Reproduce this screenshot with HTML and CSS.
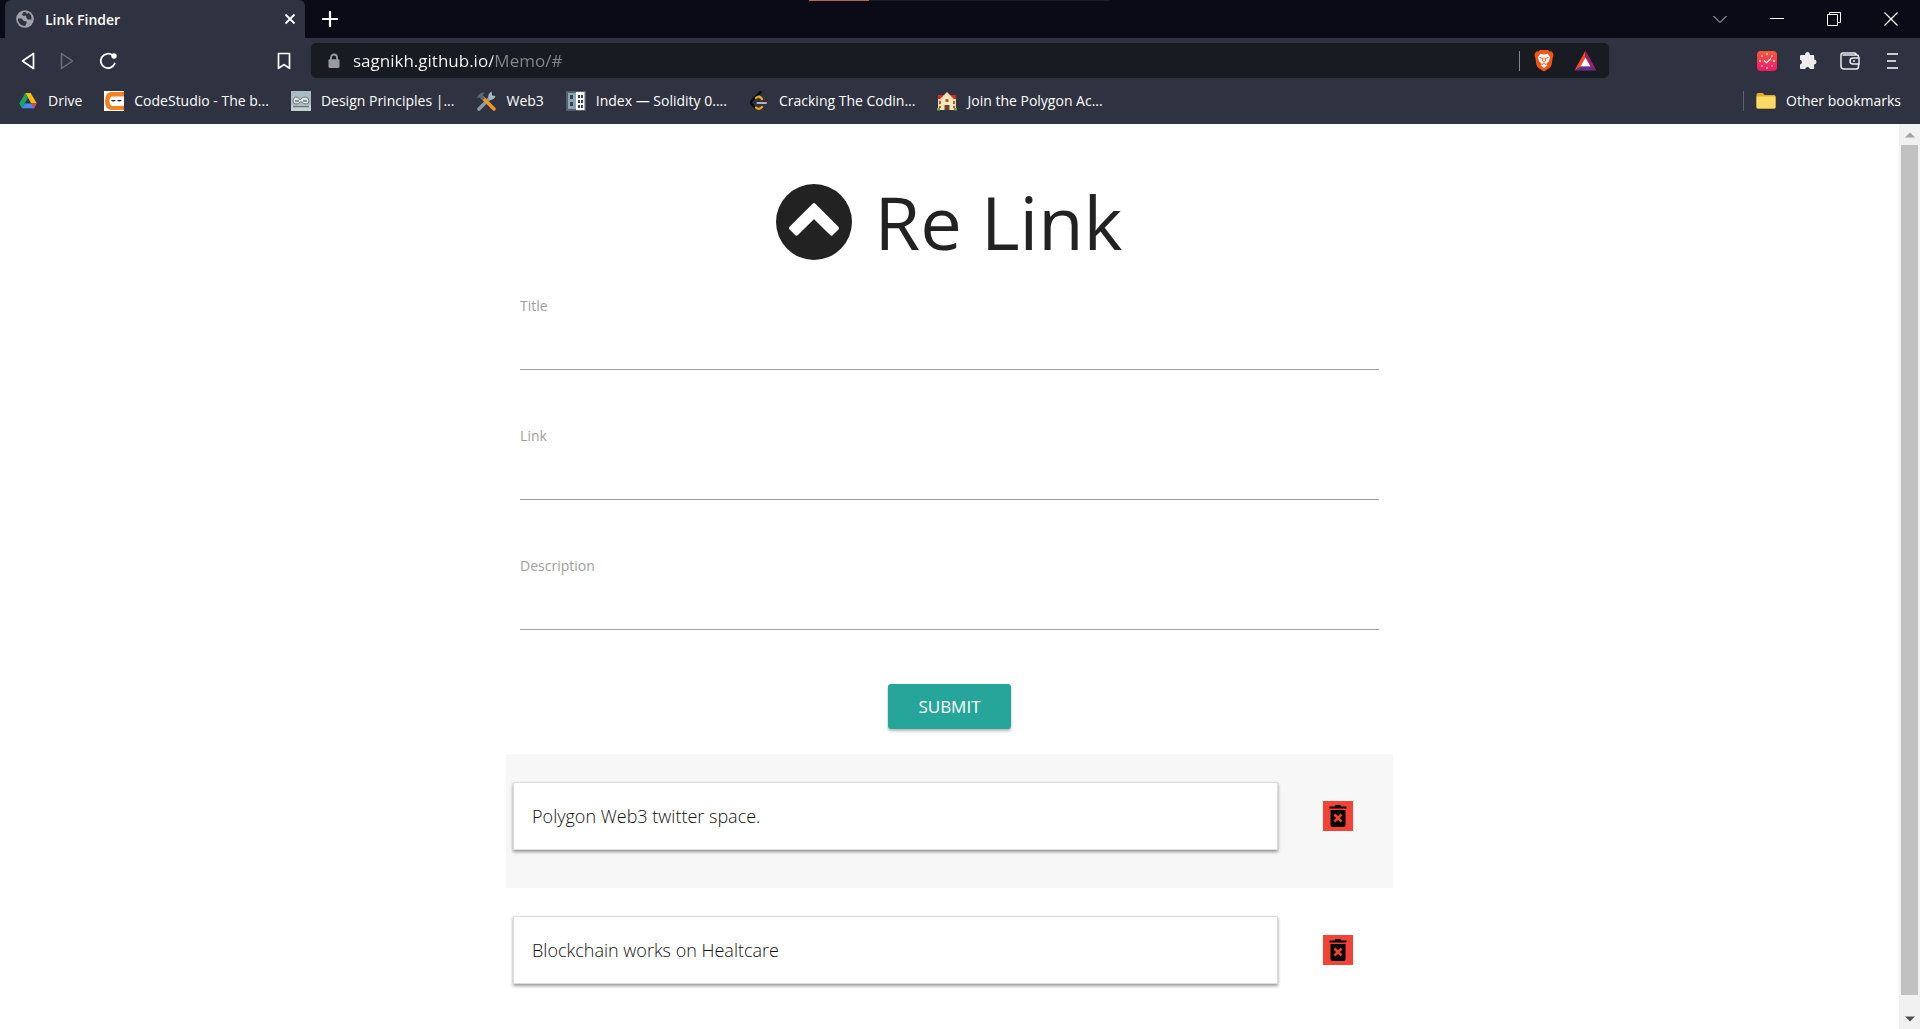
FILE: index.html
```html
<!DOCTYPE html>
<html lang="en">
<head>
<meta charset="utf-8">
<title>Link Finder</title>
<link rel="stylesheet" href="styles.css">
</head>
<body>
<header class="browser">
  <div class="tabstrip">
    <div class="tab">
      <svg class="tab-icon" viewBox="0 0 18 18"><circle cx="9" cy="9" r="8.8" fill="#9fa2a9"/><path d="M2 8.500h3.500l2.500 2.500 2.500.5v2L9 16q-5.500-.5-7-5.500zM7.500 2L6 4.500l1.500 1.500 2.500-.5.5 2.500L12 9.500h3.500q.5-4.500-3-6.700L11 4 9.500 2z" fill="#2f3241"/></svg>
      <span class="tab-title">Link Finder</span>
      <button class="icon-btn tab-close" aria-label="Close tab"><svg width="12" height="12" viewBox="0 0 12 12"><path d="M1.500 1.500l9 9M10.500 1.500l-9 9" stroke="#fff" stroke-width="1.800"/></svg></button>
    </div>
    <button class="icon-btn new-tab" aria-label="New tab"><svg width="16" height="16" viewBox="0 0 16 16"><path d="M8 1v14M1 8h14" stroke="#fff" stroke-width="2.200" stroke-linecap="round"/></svg></button>
    <div class="window-buttons">
      <button class="icon-btn" aria-label="Search tabs"><svg width="14" height="14" viewBox="0 0 14 14"><path d="M.5 4l6.500 6.500L13.500 4" fill="none" stroke="#d5d5da"/></svg></button>
      <button class="icon-btn" aria-label="Minimize"><svg width="14" height="14" viewBox="0 0 14 14"><path d="M0 6.500h14" stroke="#fff"/></svg></button>
      <button class="icon-btn" aria-label="Restore"><svg width="14" height="14" viewBox="0 0 14 14"><path d="M.5 2.500h10v11H.5zM2.500 2V.5h11v10H11" fill="none" stroke="#fff"/></svg></button>
      <button class="icon-btn" aria-label="Close window"><svg width="14" height="14" viewBox="0 0 14 14"><path d="M.5.5l13 13M13.500.5l-13 13" stroke="#fff" stroke-width="1.200"/></svg></button>
    </div>
    <div class="progress"><div class="progress-fill"></div></div>
  </div>

  <div class="toolbar">
    <div class="nav">
      <button class="icon-btn" aria-label="Back"><svg width="14" height="18" viewBox="0 0 14 18"><path d="M12.500 1.500v15L1.500 9z" fill="none" stroke="#fff" stroke-width="1.700" stroke-linejoin="round"/></svg></button>
      <button class="icon-btn" aria-label="Forward"><svg width="14" height="18" viewBox="0 0 14 18"><path d="M1.500 1.500v15l11-7.500z" fill="none" stroke="#6d707b" stroke-width="1.500" stroke-linejoin="round"/></svg></button>
      <button class="icon-btn" aria-label="Reload"><svg width="18" height="18" viewBox="0 0 18 18"><path d="M15.700 11.500A7.200 7.200 0 1 1 13.500 3.300" fill="none" stroke="#fff" stroke-width="1.800" stroke-linecap="round"/><circle cx="15" cy="4" r="2.700" fill="#fff"/></svg></button>
      <button class="icon-btn bookmark" aria-label="Bookmark this page"><svg width="14" height="18" viewBox="0 0 14 18"><path d="M1.500 1.500h11v14.800L7 12.600l-5.500 3.700z" fill="none" stroke="#fff" stroke-width="1.700" stroke-linejoin="round"/></svg></button>
    </div>
    <div class="address">
      <svg class="lock" width="12" height="16" viewBox="0 0 12 16"><path d="M3 7V4.500a3 3 0 0 1 6 0V7" fill="none" stroke="#999ba0" stroke-width="1.800"/><rect x=".5" y="6.200" width="11" height="8.800" rx="1.200" fill="#999ba0"/></svg>
      <input class="url" type="text" aria-label="Address" value="sagnikh.github.io/Memo/#">
      <button class="icon-btn shield" aria-label="Brave Shields"><svg width="20" height="23" viewBox="0 0 20 23"><path d="M6 1h8l1.500 1.600 2.500-.2L19.600 6l-.8 2.500L17.500 16q-.5 2-2 3L10 22.600 4.500 19q-1.500-1-2-3L1.200 8.500.4 6 2 2.400l2.500.2z" fill="#f2571a"/><path d="M6.500 4.800L10 5.500l3.500-.7 2.700 3.400-1.400 4-2.500 2.600.4 2L10 19l-2.700-2.200.4-2-2.500-2.600-1.400-4z" fill="#fff"/><path d="M5.500 8.500l2.800.8M14.500 8.500l-2.800.8M9 8.500L8.500 12l1.500 1.200 1.500-1.200L11 8.500M8 15.500l2-1 2 1" fill="none" stroke="#f2571a" stroke-width="1"/></svg></button>
      <button class="icon-btn" aria-label="Rewards"><svg width="23" height="21" viewBox="0 0 23 21"><path d="M11.500.5v7.500L6.500 17 .5 20.500z" fill="#ff4724"/><path d="M11.500.5l11 20-6-3.500-5-9z" fill="#9e1f63"/><path d="M.5 20.500h22l-6-3.500h-10z" fill="#662d91"/><path d="M11.500 7.500l5 9h-10z" fill="#fff"/></svg></button>
    </div>
    <div class="extensions">
      <button class="icon-btn" aria-label="Clock extension"><svg width="20" height="20" viewBox="0 0 20 20"><defs><linearGradient id="clock" x1="0" y1="0" x2="0" y2="1"><stop offset="0" stop-color="#ff5a35"/><stop offset="1" stop-color="#f5146c"/></linearGradient></defs><rect width="20" height="20" rx="4" fill="url(#clock)"/><path d="M7 9.500l2.500 2.200L14 7.500M10 2v2M10 16v2M2 10h2M16 10h2M4.500 4.500l1 1M15.500 4.500l-1 1M4.500 15.500l1-1M15.500 15.500l-1-1" fill="none" stroke="#fff" stroke-width="1.300"/></svg></button>
      <button class="icon-btn" aria-label="Extensions"><svg width="19" height="19" viewBox="0 0 19 19"><path d="M2.500 4h3.700a2.400 2.400 0 1 1 4.600 0h3.400q1 0 1 1v3.600a2.300 2.300 0 1 1 0 4.600V17q0 1-1 1h-3.300a2.400 2.400 0 0 0-4.700 0H2q-1 0-1-1v-3.500a2.400 2.400 0 0 0 0-4.700V5q0-1 1.500-1z" fill="#ededf0"/></svg></button>
      <button class="icon-btn" aria-label="Wallet"><svg width="20" height="18" viewBox="0 0 20 18"><path d="M18.500 6V4.500q0-1.500-1.500-1.500H2.500M16 3V2q0-1-1.500-1H3Q1 1 1 3v11q0 3 3 3h12q2.500 0 2.500-2.500V12" fill="none" stroke="#ededf0" stroke-width="1.500"/><path d="M19 6h-6a3 3 0 0 0 0 6h6zM13 9h2" fill="none" stroke="#ededf0" stroke-width="1.500"/></svg></button>
      <button class="icon-btn menu" aria-label="Menu"><svg width="12" height="18" viewBox="0 0 12 18"><path d="M1 2h11M1 9h9M1 16h11" stroke="#fff" stroke-width="1.700"/></svg></button>
    </div>
  </div>

  <nav class="bookmarks">
    <a href="#"><svg viewBox="0 0 20 20"><path d="M7.300 2h5.400l6 10.300h-5.500z" fill="#fbbc05"/><path d="M7.300 2L10 6.700 4 17.300 1.200 12.500z" fill="#1ea362"/><path d="M6.700 12.400h12L16 17.300H4z" fill="#4688f4"/><path d="M18.700 12.400L16 17.300l-2.800-4.900z" fill="#ea4335"/></svg>Drive</a>
    <a href="#"><svg viewBox="0 0 20 20"><path d="M0 0h20v20H0z" fill="#fff"/><path d="M20 1H8Q1 1 1 10t7 9h12v-4H9q-3.500 0-3.500-5T9 5.500h11z" fill="#f58220"/><path d="M7 9q2 3 5 0zM13 9q2 3 5 0z" fill="#222"/></svg>CodeStudio - The b...</a>
    <a href="#"><svg viewBox="0 0 20 20"><path d="M0 0h20v20H0z" fill="#a9bcc5"/><path d="M0 14h20v6H0z" fill="#c5d0d5"/><path d="M2 10q0-4 3-4t4 3q2-3 5-3 4 0 4 4 0 3-3 3t-4-2h-2q-1 2-4 2t-3-3z" fill="#dde2e3" stroke="#6e7b80" stroke-width="1"/><path d="M4 10h4M12 10h4M2 15.500h16" stroke="#68777c" stroke-width="1.300"/></svg>Design Principles |...</a>
    <a href="#"><svg viewBox="0 0 20 20"><path d="M3 18L15 6" stroke="#879ba8" stroke-width="3.600" stroke-linecap="round"/><path d="M12.500 7q-1-4 3-6.500l.5 4 3.500.5q-1.500 4-5.500 4z" fill="#a6bac6"/><path d="M7 7l11 11" stroke="#f7941d" stroke-width="3.500" stroke-linecap="round"/><path d="M1 7Q3 1 9 1.500L6.500 4 9 7 6.500 9.500 4 6.500z" fill="#596b78"/></svg>Web3</a>
    <a href="#"><svg viewBox="0 0 20 20"><path d="M0 0h20v20H0z" fill="#51606a"/><path d="M2 2h8v16H2z" fill="#8ca6b5"/><path d="M10 1h8.500v18H10z" fill="#fff"/><path d="M4 4h3v4H4zM4 11h3v4H4zM12 4h2v3h-2zM15 4h2v3h-2zM12 9h2v3h-2zM15 9h2v3h-2zM12 14h2v3h-2zM15 14h2v3h-2z" fill="#35434c"/></svg>Index — Solidity 0....</a>
    <a href="#"><svg viewBox="0 0 20 20"><path d="M11.500 1L3 9.500q-2 2 0 4l3 3" fill="none" stroke="#090909" stroke-width="2.400" stroke-linecap="round"/><path d="M7 7q3-3 6 1M7 16.500q3 3 6-.5" fill="none" stroke="#f5a11b" stroke-width="2.300" stroke-linecap="round"/><path d="M8.500 12h8.500" stroke="#b3b3b3" stroke-width="2" stroke-linecap="round"/></svg>Cracking The Codin...</a>
    <a href="#"><svg viewBox="0 0 20 20"><path d="M1 7h18v12H1z" fill="#f2d9a3"/><path d="M1 4h18v4H1z" fill="#d72c22"/><path d="M4 8l6-6 6 6v11H4z" fill="#fbe7b9"/><path d="M4 8.500l6-6 6 6" fill="none" stroke="#f5ddb0" stroke-width="2"/><path d="M7.500 14h5v5h-5z" fill="#6c4230"/><path d="M2 10h2v3H2zM16 10h2v3h-2zM2 15h2v2H2zM16 15h2v2h-2zM8.500 8h3v3h-3z" fill="#9a6542"/><path d="M0 17h3v2.500H0zM17 17h3v2.500h-3z" fill="#6ea544"/></svg>Join the Polygon Ac...</a>
    <a href="#" class="other"><svg viewBox="0 0 20 20"><path d="M.5 3.500q0-1.500 1.500-1.500h5l1.500 2H18q1.500 0 1.500 1.500V16q0 1.500-1.500 1.500H2Q.5 17.500.5 16z" fill="#dfae2e"/><path d="M.5 5.500h19V16q0 1.500-1.500 1.500H2Q.5 17.500.5 16z" fill="#ffda63"/></svg>Other bookmarks</a>
  </nav>
</header>

<div class="viewport">
  <main class="page">
    <div class="column">
      <h1 class="brand">
        <svg class="brand-icon" viewBox="0 0 76 76"><circle cx="38" cy="38" r="38" fill="#222"/><path d="M38 21.200L61 44.200l-5.500 5.500L38 32.300 20.500 49.700 15 44.200z" fill="#fff" stroke="#fff" stroke-width="4" stroke-linejoin="round"/></svg>
        Re Link
      </h1>
      <form class="form">
        <div class="field"><label for="title">Title</label><input id="title" type="text"></div>
        <div class="field"><label for="link">Link</label><input id="link" type="text"></div>
        <div class="field"><label for="description">Description</label><input id="description" type="text"></div>
        <button class="submit" type="button">SUBMIT</button>
      </form>
      <ul class="links">
        <li class="row">
          <a class="card" href="#">Polygon Web3 twitter space.</a>
          <button class="delete" aria-label="Delete Polygon Web3 twitter space."><svg width="18" height="22" viewBox="0 0 18 22"><path d="M.5 1.500h5L6.500 0h5l1 1.500h5v2H.5zM1.500 5h15v15q0 2-2 2h-11q-2 0-2-2z"/><path d="M5.500 9.500l7 7M12.500 9.500l-7 7" stroke="#f44336" stroke-width="2.600"/></svg></button>
        </li>
        <li class="row">
          <a class="card" href="#">Blockchain works on Healtcare</a>
          <button class="delete" aria-label="Delete Blockchain works on Healtcare"><svg width="18" height="22" viewBox="0 0 18 22"><path d="M.5 1.500h5L6.500 0h5l1 1.500h5v2H.5zM1.500 5h15v15q0 2-2 2h-11q-2 0-2-2z"/><path d="M5.500 9.500l7 7M12.500 9.500l-7 7" stroke="#f44336" stroke-width="2.600"/></svg></button>
        </li>
      </ul>
    </div>
  </main>
  <div class="scrollbar">
    <svg width="10" height="6" viewBox="0 0 10 6"><path d="M0 5.500L5 .5l5 5z" fill="#a3a3a3"/></svg>
    <div class="thumb"></div>
    <svg width="10" height="6" viewBox="0 0 10 6"><path d="M0 .5l5 5 5-5z" fill="#505050"/></svg>
  </div>
</div>
</body>
</html>
```
FILE: styles.css
```css
* {
  box-sizing: border-box;
}

body {
  margin: 0;
  min-height: 100vh;
  display: flex;
  flex-direction: column;
  background: #fff;
  color: #222;
  font-family: "Open Sans", "Noto Sans", sans-serif;
}

.icon-btn {
  display: flex;
  align-items: center;
  justify-content: center;
  padding: 0;
  border: 0;
  background: none;
}

/* Browser chrome */
.browser {
  background: #2f3241;
  color: #fff;
  font-size: 14px;
}

.tabstrip {
  position: relative;
  display: flex;
  height: 38px;
  padding: 0 22px 0 5px;
  background: #0a0b16;
}

.tab {
  display: flex;
  align-items: center;
  width: 300px;
  padding: 0 9px 0 11px;
  border-radius: 6px 6px 0 0;
  background: #2f3241;
}

.tab-icon {
  width: 18px;
  height: 18px;
  margin-right: 11px;
}

.tab-title {
  flex: 1;
  font-weight: 600;
}

.new-tab {
  width: 50px;
}

.window-buttons {
  display: flex;
  gap: 43px;
  margin-left: auto;
}

.progress {
  position: absolute;
  top: 0;
  left: 809px;
  width: 301px;
  height: 1px;
  background: #1b1d24;
}

.progress-fill {
  width: 20%;
  height: 1px;
  background: #b9654a;
}

.toolbar {
  display: flex;
  align-items: center;
  height: 45px;
  padding: 0 18px 0 21px;
}

.nav {
  display: flex;
  align-items: center;
  gap: 25px;
  width: 290px;
  padding-right: 20px;
}

.bookmark {
  margin-left: auto;
}

.address {
  display: flex;
  align-items: center;
  flex: 1;
  gap: 20px;
  height: 35px;
  padding: 0 12px 0 17px;
  border-radius: 5px;
  background: #181b21;
}

.url {
  flex: 1;
  min-width: 0;
  padding: 0;
  border: 0;
  outline: 0;
  font: 17px "Open Sans", "Noto Sans", sans-serif;
  color: #fff;
  background: linear-gradient(to right, #fff 140px, #85878b 140px);
  background-clip: text;
  -webkit-background-clip: text;
  -webkit-text-fill-color: transparent;
}

.lock {
  margin-right: -7px;
}

.shield {
  padding-left: 14px;
  border-left: 1px solid #85878b;
  height: 20px;
}

.extensions {
  display: flex;
  align-items: center;
  justify-content: flex-end;
  gap: 22px;
  width: 293px;
}

.menu {
  width: 20px;
}

.bookmarks {
  display: flex;
  align-items: center;
  gap: 22px;
  height: 41px;
  padding: 0 19px 6px 18px;
}

.bookmarks a {
  display: flex;
  align-items: center;
  gap: 10px;
  color: #fff;
  text-decoration: none;
  white-space: nowrap;
}

.bookmarks svg {
  width: 20px;
  height: 20px;
}

.bookmarks .other {
  margin-left: auto;
  padding-left: 12px;
  border-left: 1px solid #5d606f;
}

/* Web page */
.viewport {
  display: flex;
  flex: 1;
}

.page {
  flex: 1;
}

.column {
  width: 46.7%;
  margin: 0 auto;
  padding-top: 48px;
}

.brand {
  display: flex;
  align-items: center;
  justify-content: center;
  gap: 22px;
  height: 100px;
  margin: 0;
  font-weight: 400;
  font-size: 74px;
  line-height: 100px;
}

.brand-icon {
  width: 76px;
  height: 76px;
}

.form {
  padding: 0 14px;
}

.field {
  display: flex;
  flex-direction: column;
  height: 130px;
  padding-top: 24px;
}

.field label {
  color: #9e9e9e;
  font-size: 14px;
  line-height: 20px;
}

.field input {
  height: 54px;
  padding: 0;
  border: 0;
  border-bottom: 1px solid #9e9e9e;
  background: none;
  font: 18px "Open Sans", "Noto Sans", sans-serif;
}

.submit {
  display: block;
  width: 123px;
  height: 45px;
  margin: 22px auto 25px;
  padding: 0;
  border: 0;
  border-radius: 3px;
  background: #26a69a;
  box-shadow: 0 2px 3px rgba(0, 0, 0, 0.3);
  color: #fff;
  font: 17px "Open Sans", "Noto Sans", sans-serif;
}

.links {
  margin: 0;
  padding: 0;
  list-style: none;
}

.row {
  display: flex;
  align-items: center;
  gap: 45px;
  padding: 28px 40px 38px 7px;
}

.row:nth-child(odd) {
  background: #f7f7f7;
}

.card {
  flex: 1;
  padding: 20px 18px;
  border: 1px solid #ddd;
  background: #fff;
  box-shadow: 0 2px 3px rgba(0, 0, 0, 0.4);
  color: #111;
  font-size: 18px;
  font-weight: 300;
  line-height: 26px;
  text-decoration: none;
}

.delete {
  display: flex;
  align-items: center;
  justify-content: center;
  width: 30px;
  height: 30px;
  padding: 0;
  border: 0;
  background: #f44336;
}

.scrollbar {
  display: flex;
  flex-direction: column;
  align-items: center;
  justify-content: space-between;
  gap: 7px;
  width: 21px;
  padding: 8px 2px 7px;
  background: #f1f1f1;
}

.thumb {
  flex: 1;
  width: 17px;
  margin-bottom: 14px;
  background: #c1c1c1;
}
```
